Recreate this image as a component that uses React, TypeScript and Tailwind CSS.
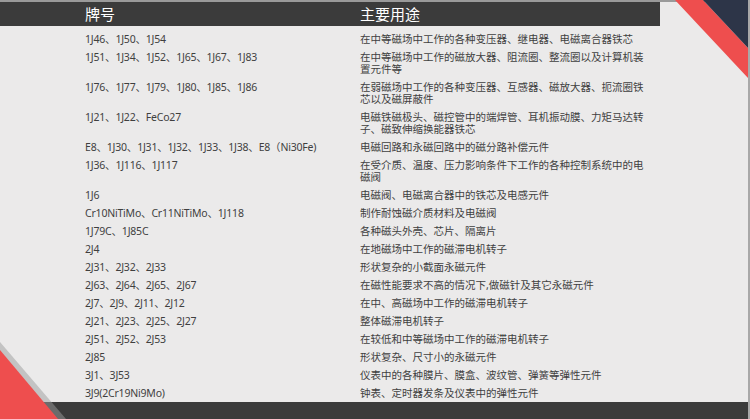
const rows: [string, string][] = [
  ["1J46、1J50、1J54", "在中等磁场中工作的各种变压器、继电器、电磁离合器铁芯"],
  ["1J51、1J34、1J52、1J65、1J67、1J83", "在中等磁场中工作的磁放大器、阻流圈、整流圈以及计算机装置元件等"],
  ["1J76、1J77、1J79、1J80、1J85、1J86", "在弱磁场中工作的各种变压器、互感器、磁放大器、扼流圈铁芯以及磁屏蔽件"],
  ["1J21、1J22、FeCo27", "电磁铁磁极头、磁控管中的端焊管、耳机振动膜、力矩马达转子、磁致伸缩换能器铁芯"],
  ["E8、1J30、1J31、1J32、1J33、1J38、E8（Ni30Fe)", "电磁回路和永磁回路中的磁分路补偿元件"],
  ["1J36、1J116、1J117", "在受介质、温度、压力影响条件下工作的各种控制系统中的电磁阀"],
  ["1J6", "电磁阀、电磁离合器中的铁芯及电感元件"],
  ["Cr10NiTiMo、Cr11NiTiMo、1J118", "制作耐蚀磁介质材料及电磁阀"],
  ["1J79C、1J85C", "各种磁头外壳、芯片、隔离片"],
  ["2J4", "在地磁场中工作的磁滞电机转子"],
  ["2J31、2J32、2J33", "形状复杂的小截面永磁元件"],
  ["2J63、2J64、2J65、2J67", "在磁性能要求不高的情况下,做磁针及其它永磁元件"],
  ["2J7、2J9、2J11、2J12", "在中、高磁场中工作的磁滞电机转子"],
  ["2J21、2J23、2J25、2J27", "整体磁滞电机转子"],
  ["2J51、2J52、2J53", "在较低和中等磁场中工作的磁滞电机转子"],
  ["2J85", "形状复杂、尺寸小的永磁元件"],
  ["3J1、3J53", "仪表中的各种膜片、膜盒、波纹管、弹簧等弹性元件"],
  ["3J9(2Cr19Ni9Mo)", "钟表、定时器发条及仪表中的弹性元件"],
];

export default function App() {
  return (
    <div
      className="relative w-[750px] h-[419px] overflow-hidden bg-[#ebeaea] flex flex-col"
      style={{ fontFamily: '"Noto Sans", "Noto Sans CJK SC", sans-serif' }}
    >
      <div className="h-[2px] bg-[#9a9a9a]" />
      <div className="h-[25px] w-[660px] bg-[#3b3b3b] flex items-center text-white text-[15px]">
        <div className="pl-[85px] w-[360px]">牌号</div>
        <div>主要用途</div>
      </div>
      <div className="flex-1 flex flex-col pt-[4px] text-[10.5px] leading-[12px] text-[#3f3f3f]">
        {rows.map(([a, b], i) => (
          <div key={i} className="flex py-[3px]">
            <div className="pl-[85px] w-[360px] shrink-0 tracking-[-0.2px]">{a}</div>
            <div className="w-[287px]">{b}</div>
          </div>
        ))}
      </div>
      <div className="h-[18px] bg-[#3b3b3b]" />
      <div className="absolute right-0 top-0 bottom-0 w-[2px] bg-[#a8a8a8]" />
      <svg className="absolute left-0 top-0" width="750" height="419">
        <polygon points="0,342 0,419 66,419" fill="#9c9c9c" opacity="0.5" />
        <polygon points="0,350 0,419 58,419" fill="#ee4e4e" />
        <polygon points="675,0 703,0 748,48 748,78" fill="#ee4e4e" />
        <polygon points="703,0 748,0 748,48" fill="#2d3548" />
      </svg>
    </div>
  );
}
